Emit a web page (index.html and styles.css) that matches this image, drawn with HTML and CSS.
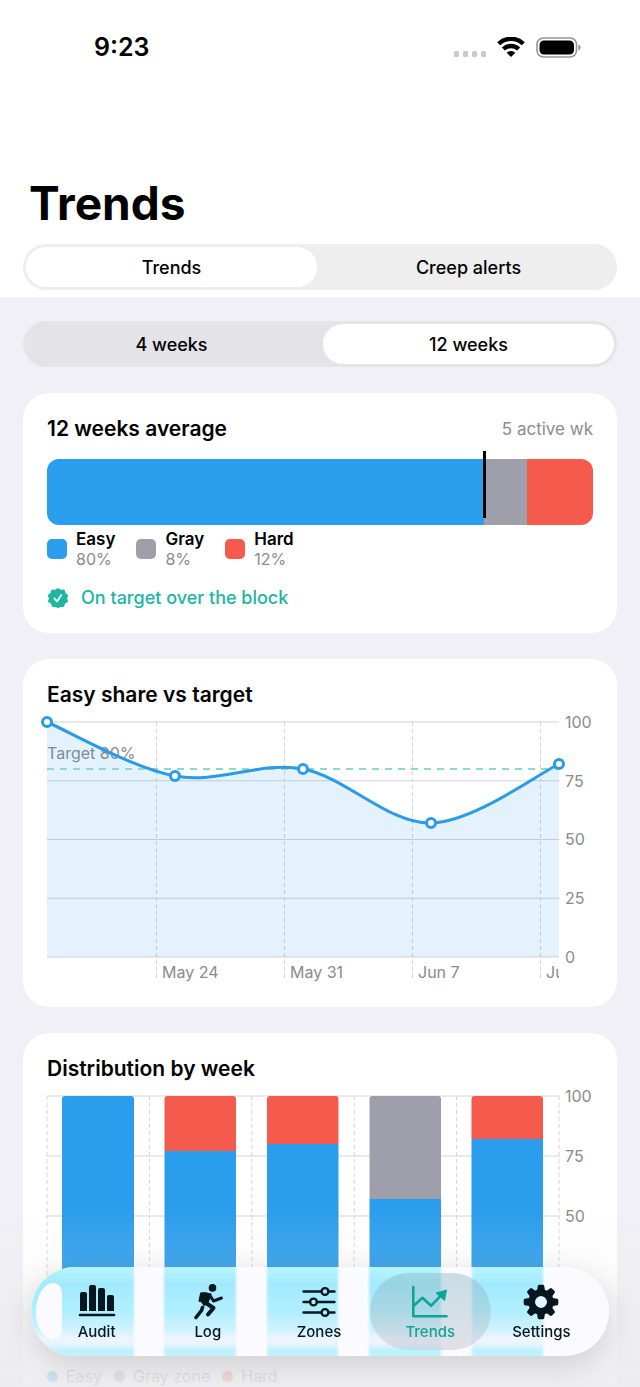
FILE: index.html
```html
<!DOCTYPE html>
<html lang="en">
<head>
<meta charset="utf-8">
<meta name="viewport" content="width=device-width, initial-scale=1">
<title>Trends</title>
<link rel="stylesheet" href="styles.css">
</head>
<body>
<div class="screen">
  <header class="top">
    <div class="status">
      <time class="clock">9:23</time>
      <div class="status-icons">
        <svg class="signal" width="32" height="6" viewBox="0 0 32 6" aria-hidden="true"><g fill="#c9c9c9"><rect width="5" height="6" rx="1.5"/><rect x="9" width="5" height="6" rx="1.5"/><rect x="18" width="5" height="6" rx="1.5"/><rect x="27" width="5" height="6" rx="1.5"/></g></svg>
        <svg width="28" height="20" viewBox="0 0 28 20" aria-hidden="true"><g fill="none" stroke="#000" stroke-width="4.400"><path d="M1.700 6.800a17.600 17.600 0 0 1 24.600 0"/><path d="M6.400 12a11 11 0 0 1 15.200 0"/></g><path d="M14 20l-4.300-4.200a6 6 0 0 1 8.600 0z"/></svg>
        <svg width="45" height="21" viewBox="0 0 45 21" aria-hidden="true"><rect x="1" y="1" width="39.500" height="19" rx="6.500" fill="none" stroke="#969696" stroke-width="1.600"/><rect x="3.500" y="3.500" width="34.500" height="14" rx="4.500"/><path d="M42.300 7.500c3 1 3 5 0 6z" fill="#969696"/></svg>
      </div>
    </div>
    <h1>Trends</h1>
    <div class="segments segments-top" role="tablist" aria-label="View">
      <button class="segment selected" role="tab" aria-selected="true">Trends</button>
      <button class="segment" role="tab" aria-selected="false">Creep alerts</button>
    </div>
  </header>

  <main class="content">
    <div class="segments" role="tablist" aria-label="Period">
      <button class="segment" role="tab" aria-selected="false">4 weeks</button>
      <button class="segment selected" role="tab" aria-selected="true">12 weeks</button>
    </div>

    <section class="card average">
      <div class="card-head">
        <h2>12 weeks average</h2>
        <span class="muted">5 active wk</span>
      </div>
      <div class="share">
        <div class="share-bar">
          <span class="easy" style="width:80%"></span>
          <span class="gray" style="width:8%"></span>
          <span class="hard" style="width:12%"></span>
        </div>
        <span class="marker" style="left:80%"></span>
      </div>
      <dl class="legend">
        <div class="legend-item"><i class="swatch easy"></i><div><dt>Easy</dt><dd>80%</dd></div></div>
        <div class="legend-item"><i class="swatch gray"></i><div><dt>Gray</dt><dd>8%</dd></div></div>
        <div class="legend-item"><i class="swatch hard"></i><div><dt>Hard</dt><dd>12%</dd></div></div>
      </dl>
      <p class="verdict">
        <svg width="22" height="22" viewBox="0 0 22 22" aria-hidden="true"><path fill="#20b5a3" stroke="#20b5a3" stroke-width="2" stroke-linejoin="round" d="M11 2l2.600 1.900 3.200-.4.800 3.100 2.600 1.900L19 11.500l1 2.900-2.800 1.600-1 3-3.200-.2L11 20.300l-2-1.500-3.200.2-1-3L2 14.400l1-2.900-1.200-3 2.600-1.900.8-3.100 3.200.4z"/><path d="M7.500 11.500l2.500 3 4.300-6.500" fill="none" stroke="#fff" stroke-width="1.800" stroke-linecap="round" stroke-linejoin="round"/></svg>
        On target over the block
      </p>
    </section>

    <section class="card">
      <h2>Easy share vs target</h2>
      <svg class="chart" viewBox="0 -10 546 271" role="img" aria-label="Easy share vs target">
        <defs><clipPath id="plot"><rect x="0" y="-10" width="512" height="280"/></clipPath></defs>
        <path class="grid" d="M0 0H512M0 58.750H512M0 117.500H512M0 176.250H512M0 235H512"/>
        <path class="grid dashed" d="M109.500 0V258M237.500 0V258M365.500 0V258M493.500 0V258"/>
        <text class="axis" x="0" y="37">Target 80%</text>
        <path class="area" d="M0 0C21 9 85 46 128 54C171 62 213 39 256 47C299 55 341 102 384 101C427 100 491 52 512 42V235H0Z"/>
        <path class="target" d="M0 47H512"/>
        <path class="line" d="M0 0C21 9 85 46 128 54C171 62 213 39 256 47C299 55 341 102 384 101C427 100 491 52 512 42"/>
        <g class="points"><circle cx="0" cy="0" r="4.500"/><circle cx="128" cy="54" r="4.500"/><circle cx="256" cy="47" r="4.500"/><circle cx="384" cy="101" r="4.500"/><circle cx="512" cy="42" r="4.500"/></g>
        <g class="axis">
          <text x="518" y="6">100</text><text x="518" y="65">75</text><text x="518" y="123">50</text><text x="518" y="182">25</text><text x="518" y="241">0</text>
          <g clip-path="url(#plot)"><text x="115" y="256">May 24</text><text x="243" y="256">May 31</text><text x="371" y="256">Jun 7</text><text x="499" y="256">Jun 14</text></g>
        </g>
      </svg>
    </section>

    <section class="card">
      <h2>Distribution by week</h2>
      <svg class="chart" viewBox="0 -10 546 274" role="img" aria-label="Distribution by week">
        <path class="grid" d="M0 0H512M0 60H512M0 120H512M0 180H512M0 240H512"/>
        <path class="grid dashed" d="M0 0V262M102.400 0V262M204.800 0V262M307.200 0V262M409.600 0V262M512 0V262"/>
        <g fill="#2a9dec">
          <path d="M15 240V3q0-3 3-3h66q3 0 3 3V240z"/>
          <path d="M117.500 55h71.500v185h-71.500zM220 48h71.500v192H220zM322.500 103H394v137h-71.500zM424.500 43H496v197h-71.500z"/>
        </g>
        <g fill="#f45b4d">
          <path d="M117.500 55V3q0-3 3-3h65.500q3 0 3 3V55z"/>
          <path d="M220 48V3q0-3 3-3h65.500q3 0 3 3V48z"/>
          <path d="M424.500 43V3q0-3 3-3H493q3 0 3 3V43z"/>
        </g>
        <path fill="#9f9fab" d="M322.500 103V3q0-3 3-3H391q3 0 3 3V103z"/>
        <g class="axis"><text x="518" y="6">100</text><text x="518" y="66">75</text><text x="518" y="126">50</text></g>
      </svg>
      <ul class="key">
        <li><i class="dot easy"></i>Easy</li>
        <li><i class="dot gray"></i>Gray zone</li>
        <li><i class="dot hard"></i>Hard</li>
      </ul>
    </section>
  </main>

  <div class="scrim"></div>
  <nav class="tabbar" aria-label="Main">
    <svg class="glass" viewBox="0 0 578 89" preserveAspectRatio="none" aria-hidden="true">
      <defs>
        <linearGradient id="cyan" x1="0" y1="0" x2="0" y2="1">
          <stop offset="0" stop-color="#b8f5ff"/><stop offset=".2" stop-color="#a3e9fe"/><stop offset=".5" stop-color="#b0efff"/><stop offset=".73" stop-color="#d5f3ff"/><stop offset=".8" stop-color="#f1f3fe"/><stop offset=".86" stop-color="#e5f5ff"/><stop offset=".93" stop-color="#bdf1fd"/><stop offset="1" stop-color="#bff4fd"/>
        </linearGradient>
        <filter id="soft" x="-10%" y="-10%" width="120%" height="120%"><feGaussianBlur stdDeviation="1.200 .1"/></filter>
      </defs>
      <rect width="578" height="89" fill="#fafaff"/>
      <g fill="url(#cyan)" filter="url(#soft)">
        <rect x="-5" y="-1" width="108" height="91"/><rect x="133" y="-1" width="72" height="91"/><rect x="236" y="-1" width="71" height="91"/><rect x="338" y="-1" width="72" height="91"/><rect x="441" y="-1" width="71" height="91"/>
      </g>
      <path d="M21 16C27 16 31 19 31 27V62C31 70 27 73 21 72C11 70 5 59 5 45S11 18 21 16Z" fill="#fafaff"/>
    </svg>
    <a class="tab" href="#audit">
      <svg width="38" height="36" viewBox="0 0 38 36" aria-hidden="true"><path fill="currentColor" d="M2 10q0-2 2-2h3q2 0 2 2v17H2zM11 3q0-2 2-2h3q2 0 2 2v24h-7zM20 6q0-2 2-2h3q2 0 2 2v21h-7zM29 13q0-2 2-2h3q2 0 2 2v14h-7z"/><path d="M2 31h34" stroke="currentColor" stroke-width="2.600" stroke-linecap="round"/></svg>
      Audit
    </a>
    <a class="tab" href="#log">
      <svg width="36" height="36" viewBox="0 0 36 36" aria-hidden="true"><circle cx="22.500" cy="3.900" r="3.800" fill="currentColor"/><path fill="currentColor" stroke="currentColor" stroke-width="2" stroke-linejoin="round" d="M13 9.500l7.500.8-2.800 8.200-3.500 2.500-2.700-4z"/><g fill="none" stroke="currentColor" stroke-linecap="round" stroke-linejoin="round"><path d="M17 10l-5.500-.2-1.500 6.700" stroke-width="3"/><path d="M20 11.500l3.500 5.500 8-3" stroke-width="3"/><path d="M16 19l7.500 5-5.500 6.500" stroke-width="4"/><path d="M12.500 23.500l-1 3-5.500 7" stroke-width="3.600"/></g></svg>
      Log
    </a>
    <a class="tab" href="#zones">
      <svg width="36" height="36" viewBox="0 0 36 36" aria-hidden="true"><g fill="none" stroke="currentColor" stroke-width="2.400" stroke-linecap="round"><path d="M2.500 7.500H20M28 7.500h5.500M2.500 18H8.500M16.500 18h17M2.500 28.500H20M28 28.500h5.500"/><circle cx="24" cy="7.500" r="3.400"/><circle cx="12.500" cy="18" r="3.400"/><circle cx="24" cy="28.500" r="3.400"/></g></svg>
      Zones
    </a>
    <a class="tab current" href="#trends" aria-current="page">
      <svg width="38" height="36" viewBox="0 0 38 36" aria-hidden="true"><g fill="none" stroke="currentColor" stroke-width="2.600" stroke-linecap="round" stroke-linejoin="round"><path d="M2.300 3v29.200H35.500"/><path d="M3 21.500l8.500-7.700 8.500 8 9-9.500"/></g><path fill="currentColor" stroke="currentColor" stroke-linejoin="round" d="M35.500 6l-2 10.500-8.500-7.500z"/></svg>
      Trends
    </a>
    <a class="tab" href="#settings">
      <svg width="36" height="36" viewBox="-18 -18 36 36" aria-hidden="true"><g fill="currentColor"><g id="teeth"><path id="tooth" d="M-4.200-10L-3.200-16.200Q-2.900-17.300-1.800-17.300H1.800Q2.900-17.300 3.200-16.200L4.200-10zM-4.200 10L-3.200 16.200Q-2.900 17.300-1.800 17.300H1.800Q2.900 17.300 3.200 16.200L4.200 10z"/><use href="#tooth" transform="rotate(90)"/></g><use href="#teeth" transform="rotate(45)"/></g><circle r="9.200" fill="none" stroke="currentColor" stroke-width="7"/><circle r="5.800" fill="#e4f8ff"/></svg>
      Settings
    </a>
  </nav>
</div>
</body>
</html>
```
FILE: styles.css
```css
* { box-sizing: border-box; }

body {
  margin: 0;
  background: #f1f0f6;
  color: #000;
  font-family: Inter, "Liberation Sans", sans-serif;
  font-size: 16px;
}

h1, h2, p, dl, dd, ul { margin: 0; }

.screen {
  height: 100vh;
  overflow: hidden;
}

.top {
  background: #fff;
  padding: 0 23px 7px;
}

.status {
  display: flex;
  justify-content: space-between;
  align-items: center;
  padding: 31px 36px 0 71px;
}

.clock {
  font-size: 25px;
  line-height: 32px;
  font-weight: 600;
}

.status-icons {
  display: flex;
  align-items: center;
  gap: 11px;
}

.signal { margin-top: 14px; }

h1 {
  padding: 108px 6px 0;
  font-size: 46px;
  line-height: 64px;
  font-weight: 700;
}

.segments {
  display: flex;
  gap: 6px;
  padding: 3px;
  border-radius: 24px;
  background: #e4e3e8;
}

.segments-top {
  margin-top: 9px;
  background: #eee;
}

.segment {
  flex: 1;
  height: 40px;
  padding: 0;
  border: 0;
  border-radius: 20px;
  background: transparent;
  color: #000;
  font-family: inherit;
  font-size: 18px;
  font-weight: 500;
}

.segment.selected { background: #fff; }

.content {
  display: flex;
  flex-direction: column;
  gap: 26px;
  padding: 24px 23px;
}

.card {
  padding: 24px;
  border-radius: 26px;
  background: #fff;
}

.card-head {
  display: flex;
  justify-content: space-between;
  align-items: center;
}

h2 {
  font-size: 21px;
  line-height: 24px;
  font-weight: 600;
}

.muted {
  color: #8b8b8e;
  font-size: 17px;
}

.easy { background: #2a9dec; }
.gray { background: #9f9fab; }
.hard { background: #f45b4d; }

.share {
  position: relative;
  margin-top: 18px;
}

.share-bar {
  display: flex;
  height: 66px;
  border-radius: 12px;
  overflow: hidden;
}

.marker {
  position: absolute;
  top: -8px;
  width: 3px;
  height: 67px;
  margin-left: -1px;
  background: #000;
}

.legend {
  display: flex;
  gap: 21px;
  margin-top: 4px;
}

.legend-item {
  display: flex;
  align-items: center;
  gap: 9px;
  line-height: 20px;
}

.legend dt {
  font-size: 17px;
  font-weight: 600;
}

.legend dd {
  color: #8b8b8e;
  font-size: 16px;
}

.swatch {
  width: 20px;
  height: 20px;
  border-radius: 5px;
}

.verdict {
  display: flex;
  align-items: center;
  gap: 12px;
  margin-top: 18px;
  color: #20b5a3;
  font-size: 18px;
  line-height: 22px;
  font-weight: 500;
}

.chart {
  display: block;
  width: 100%;
  margin-top: 5px;
  overflow: visible;
}

.grid {
  fill: none;
  stroke: #d4d4d7;
}

.dashed { stroke-dasharray: 4 3; }

.axis {
  fill: #8b8b8e;
  font-size: 16px;
}

.area { fill: rgba(42, 157, 236, 0.13); }

.target {
  stroke: #8cdac8;
  stroke-width: 2;
  stroke-dasharray: 7 6;
}

.line {
  fill: none;
  stroke: #2a9be4;
  stroke-width: 3;
}

.points {
  fill: #fff;
  stroke: #2a9be4;
  stroke-width: 3;
}

.key {
  display: flex;
  gap: 12px;
  margin-top: 6px;
  padding: 0;
  list-style: none;
  color: #8b8b8e;
  font-size: 16px;
  line-height: 20px;
}

.key li {
  display: flex;
  align-items: center;
  gap: 8px;
}

.dot {
  width: 11px;
  height: 11px;
  border-radius: 50%;
}

.scrim {
  position: fixed;
  inset: auto 0 0;
  height: 180px;
  background: linear-gradient(rgba(236, 235, 238, 0), rgba(236, 235, 238, 0.15) 35%, rgba(236, 235, 238, 0.8) 85%, rgba(236, 235, 238, 0.88));
}

.tabbar {
  position: fixed;
  inset: auto 31px 31px;
  display: flex;
  height: 89px;
  padding: 6px 12px 6px 10px;
  border-radius: 45px;
  box-shadow: 0 8px 32px rgba(0, 0, 0, 0.14);
}

.glass {
  position: absolute;
  inset: 0;
  width: 100%;
  height: 100%;
  border-radius: 45px;
}

.tab {
  position: relative;
  display: flex;
  flex: 1;
  flex-direction: column;
  align-items: center;
  gap: 3px;
  padding-top: 11px;
  color: #06171f;
  font-size: 15px;
  line-height: 18px;
  font-weight: 500;
  text-decoration: none;
}

.tab.current {
  z-index: 0;
  color: #0fa596;
}

.tab.current::before {
  content: "";
  position: absolute;
  inset: 0 -5px;
  z-index: -1;
  border-radius: 39px;
  background: linear-gradient(rgba(130, 180, 190, 0.42), rgba(190, 190, 200, 0.42));
}
```
